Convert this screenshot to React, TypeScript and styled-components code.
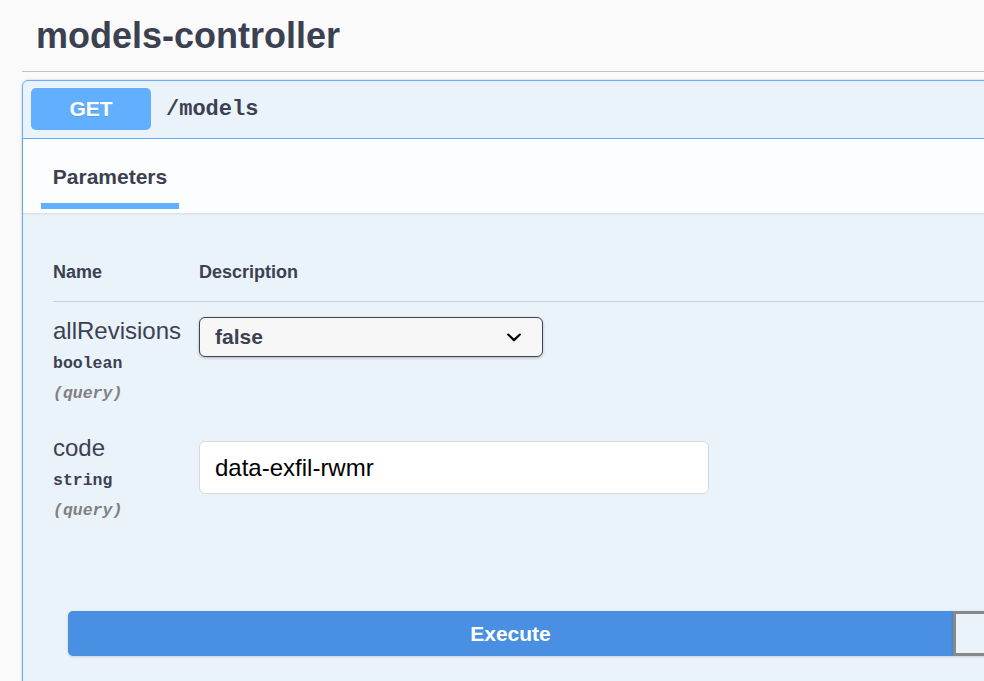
import React, { useState } from "react";
import styled, { createGlobalStyle } from "styled-components";

const GlobalStyle = createGlobalStyle`
  html, body {
    margin: 0;
    padding: 0;
    background: #fafafa;
    overflow: hidden;
  }
  body {
    font-family: "Liberation Sans", Arial, sans-serif;
    color: #3b4151;
  }
`;

const Page = styled.div`
  width: 1900px;
  padding: 0 0 0 22px;
  box-sizing: border-box;
`;

const TagHeader = styled.div`
  padding: 18px 0 17px 14px;
  border-bottom: 1px solid rgba(59, 65, 81, 0.3);
`;

const TagTitle = styled.h3`
  margin: 0;
  font-size: 36px;
  line-height: 36px;
  font-weight: 700;
  color: #3b4151;
`;

const Opblock = styled.div`
  margin-top: 8px;
  border: 1px solid #61affe;
  border-radius: 6px;
  background: rgba(97, 175, 254, 0.1);
  box-shadow: 0 0 3px rgba(0, 0, 0, 0.19);
  width: 1860px;
`;

const Summary = styled.div`
  display: flex;
  align-items: center;
  padding: 7px 8px 8px;
  border-bottom: 1px solid #61affe;
`;

const MethodBadge = styled.span`
  width: 120px;
  height: 42px;
  display: flex;
  align-items: center;
  justify-content: center;
  border-radius: 5px;
  background: #61affe;
  color: #fff;
  font-size: 21px;
  font-weight: 700;
  text-shadow: 0 1px 0 rgba(0, 0, 0, 0.1);
`;

const PathText = styled.span`
  margin-left: 15px;
  font-family: "Liberation Mono", "DejaVu Sans Mono", monospace;
  font-size: 22px;
  font-weight: 700;
  color: #3b4151;
`;

const TabHeader = styled.div`
  display: flex;
  height: 74px;
  padding-left: 18px;
  background: rgba(255, 255, 255, 0.85);
  box-shadow: 0 1px 2px rgba(0, 0, 0, 0.1);
`;

const TabItem = styled.div`
  display: flex;
  flex-direction: column;
  align-items: center;
  width: 138px;
  padding-top: 27px;
  box-sizing: border-box;
`;

const TabLabel = styled.span`
  font-size: 21px;
  line-height: 21px;
  font-weight: 700;
  color: #3b4151;
`;

const TabUnderline = styled.span`
  margin-top: 16px;
  width: 100%;
  height: 6px;
  background: #61affe;
`;

const ParamsSection = styled.div`
  padding: 50px 0 0 30px;
`;

const TableHead = styled.div`
  display: flex;
  padding-bottom: 20px;
  border-bottom: 1px solid rgba(59, 65, 81, 0.2);
`;

const HeadCell = styled.div<{ $width?: number }>`
  width: ${(p) => (p.$width ? `${p.$width}px` : "auto")};
  font-size: 18px;
  line-height: 18px;
  font-weight: 700;
  color: #3b4151;
`;

const ParamRow = styled.div`
  display: flex;
  padding-bottom: 15px;
`;

const NameCell = styled.div`
  width: 146px;
  padding-top: 17px;
  display: flex;
  flex-direction: column;
`;

const DescCell = styled.div<{ $offset: number }>`
  padding-top: ${(p) => p.$offset}px;
`;

const ParamName = styled.div`
  font-size: 24px;
  line-height: 24px;
  color: #3b4151;
`;

const ParamType = styled.div`
  padding-top: 11px;
  font-family: "Liberation Mono", "DejaVu Sans Mono", monospace;
  font-size: 16.5px;
  line-height: 20px;
  font-weight: 700;
  color: #3b4151;
`;

const ParamIn = styled.div`
  margin-top: 10px;
  font-family: "Liberation Mono", "DejaVu Sans Mono", monospace;
  font-size: 16.5px;
  line-height: 20px;
  font-style: italic;
  font-weight: 700;
  color: #808080;
`;

const SelectBox = styled.div`
  position: relative;
  width: 344px;
  height: 40px;
  box-sizing: border-box;
  display: flex;
  align-items: center;
  padding: 0 60px 0 15px;
  background: #f7f7f7;
  border: 1px solid #41444e;
  border-radius: 6px;
  box-shadow: 0 1px 3px rgba(0, 0, 0, 0.25);
  font-size: 21px;
  font-weight: 700;
  color: #3b4151;
  cursor: pointer;
`;

const Chevron = styled.svg`
  position: absolute;
  right: 13px;
  top: 50%;
  width: 30px;
  height: 30px;
  margin-top: -15px;
`;

const TextInput = styled.input`
  width: 510px;
  height: 53px;
  box-sizing: border-box;
  padding: 0 15px;
  border: 1px solid #d9d9d9;
  border-radius: 6px;
  background: #fff;
  font-family: "Liberation Sans", Arial, sans-serif;
  font-size: 24px;
  color: #000;
  outline: none;
`;

const ExecuteWrapper = styled.div`
  display: flex;
  padding: 75px 0 30px 45px;
`;

const GroupButton = styled.button<{ $primary?: boolean }>`
  width: 885px;
  height: 45px;
  box-sizing: border-box;
  font-family: "Liberation Sans", Arial, sans-serif;
  font-size: 21px;
  font-weight: 700;
  cursor: pointer;
  box-shadow: 0 1px 3px rgba(0, 0, 0, 0.15);
  color: ${(p) => (p.$primary ? "#fff" : "#3b4151")};
  background: ${(p) => (p.$primary ? "#4990e2" : "transparent")};
  border: ${(p) => (p.$primary ? "0" : "3px solid #888")};
  border-radius: ${(p) => (p.$primary ? "5px 0 0 5px" : "0 5px 5px 0")};
`;

export default function App() {
  const [allRevisions, setAllRevisions] = useState("false");
  const [code, setCode] = useState("data-exfil-rwmr");

  return (
    <>
      <GlobalStyle />
      <Page>
        <TagHeader>
          <TagTitle>models-controller</TagTitle>
        </TagHeader>
        <Opblock>
          <Summary>
            <MethodBadge>GET</MethodBadge>
            <PathText>/models</PathText>
          </Summary>
          <TabHeader>
            <TabItem>
              <TabLabel>Parameters</TabLabel>
              <TabUnderline />
            </TabItem>
          </TabHeader>
          <ParamsSection>
            <TableHead>
              <HeadCell $width={146}>Name</HeadCell>
              <HeadCell>Description</HeadCell>
            </TableHead>
            <ParamRow>
              <NameCell>
                <ParamName>allRevisions</ParamName>
                <ParamType>boolean</ParamType>
                <ParamIn>(query)</ParamIn>
              </NameCell>
              <DescCell $offset={15}>
                <SelectBox
                  onClick={() =>
                    setAllRevisions(allRevisions === "false" ? "true" : "false")
                  }
                >
                  {allRevisions}
                  <Chevron viewBox="0 0 20 20">
                    <path
                      fill="#000"
                      d="M13.418 7.859a.695.695 0 01.978 0 .68.68 0 010 .969l-3.908 3.83a.697.697 0 01-.979 0l-3.908-3.83a.68.68 0 010-.969.695.695 0 01.978 0L10 11l3.418-3.141z"
                    />
                  </Chevron>
                </SelectBox>
              </DescCell>
            </ParamRow>
            <ParamRow>
              <NameCell>
                <ParamName>code</ParamName>
                <ParamType>string</ParamType>
                <ParamIn>(query)</ParamIn>
              </NameCell>
              <DescCell $offset={22}>
                <TextInput
                  value={code}
                  onChange={(e) => setCode(e.target.value)}
                />
              </DescCell>
            </ParamRow>
          </ParamsSection>
          <ExecuteWrapper>
            <GroupButton $primary>Execute</GroupButton>
            <GroupButton>Clear</GroupButton>
          </ExecuteWrapper>
        </Opblock>
      </Page>
    </>
  );
}
